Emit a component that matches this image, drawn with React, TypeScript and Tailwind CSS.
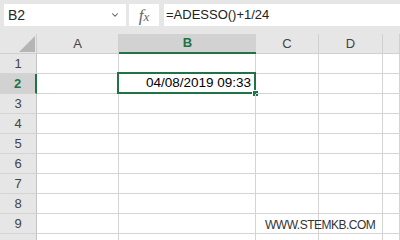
import { ChevronDown } from 'lucide-react';

const cols = ['A', 'B', 'C', 'D', ''];
const rows = [1, 2, 3, 4, 5, 6, 7, 8, 9, 10];
const font = { fontFamily: '"Liberation Sans", Arial, sans-serif' };

function HeaderCell({ label, active }: { label: string; active?: boolean }) {
  return (
    <div
      className={
        active
          ? 'h-[20px] bg-[#d2d2d2] border-b-2 border-[#217346] flex items-center justify-center text-[13px] font-bold text-[#217346]'
          : 'h-[20px] bg-[#e6e6e6] border-r border-b border-[#d0d0d0] flex items-center justify-center text-[13px] text-[#444]'
      }
    >
      {label}
    </div>
  );
}

export default function App() {
  return (
    <div className="relative w-[400px] h-[240px] overflow-hidden bg-white" style={font}>
      {/* formula bar */}
      <div className="h-[34px] bg-[#e6e6e6] flex items-start pt-[4px] pl-[4px]">
        <div className="w-[122px] h-[22px] bg-white flex items-center justify-between pl-[4px] pr-[6px]">
          <span className="text-[14px] text-[#262626]">B2</span>
          <ChevronDown className="w-[10px] h-[10px] text-[#555]" strokeWidth={2.5} />
        </div>
        <div className="ml-[3px] w-[30px] h-[22px] bg-white flex items-center justify-center">
          <span className="italic text-[17px] text-[#666] leading-none" style={{ fontFamily: '"Liberation Serif", serif' }}>
            f<span className="text-[13px]">x</span>
          </span>
        </div>
        <div className="ml-[5px] flex-1 h-[22px] bg-white flex items-center pl-[2px]">
          <span className="text-[13px] text-[#222]">=ADESSO()+1/24</span>
        </div>
      </div>

      {/* sheet grid */}
      <div className="grid grid-cols-[37px_82px_137px_63px_64px_1fr]">
        <div className="relative h-[20px] bg-[#e6e6e6] border-r border-b border-[#d0d0d0]">
          <svg className="absolute right-[1px] bottom-[1px]" width="16" height="16" viewBox="0 0 16 16">
            <polygon points="16,0 16,16 0,16" fill="#b5b5b5" />
          </svg>
        </div>
        {cols.map((c) => (
          <HeaderCell key={c || 'E'} label={c} active={c === 'B'} />
        ))}

        {rows.map((r) => (
          <>
            <div
              key={'h' + r}
              className={
                r === 2
                  ? 'h-[20px] bg-[#d2d2d2] border-r-2 border-r-[#217346] border-b border-b-[#d4d4d4] flex items-center justify-center text-[13px] font-bold text-[#217346]'
                  : 'h-[20px] bg-[#e6e6e6] border-r border-b border-r-[#c4c4c4] border-b-[#d4d4d4] flex items-center justify-center text-[13px] text-[#444]'
              }
            >
              {r < 10 ? r : ''}
            </div>
            {cols.map((c) => (
              <div key={c + r} className="relative h-[20px] border-r border-b border-[#d4d4d4]">
                {r === 2 && c === 'B' && (
                  <>
                    <div className="absolute left-[-2px] top-[-2px] right-[-1px] bottom-[-1px] border-2 border-[#217346]" />
                    <div className="absolute right-[4px] top-0 bottom-0 flex items-center text-[13.5px] text-black">
                      04/08/2019 09:33
                    </div>
                    <div className="absolute left-[134px] top-[17px] w-[5px] h-[5px] bg-[#217346] outline outline-1 outline-white" />
                  </>
                )}
              </div>
            ))}
          </>
        ))}
      </div>

      {/* watermark */}
      <div className="absolute left-[265px] top-[216px] text-[12px] tracking-[-0.5px] text-[#333]">WWW.STEMKB.COM</div>
    </div>
  );
}
